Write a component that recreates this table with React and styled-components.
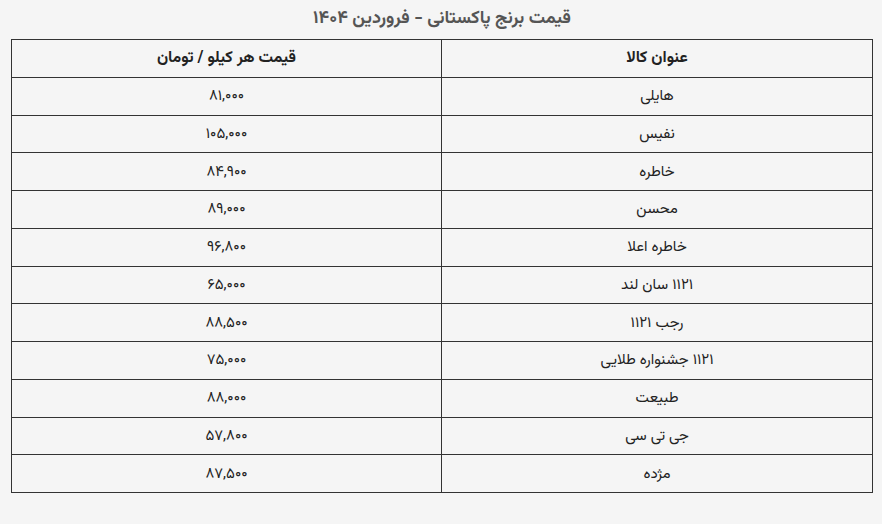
import React from "react";
import styled, { createGlobalStyle } from "styled-components";

const Global = createGlobalStyle`
  html, body { margin: 0; padding: 0; background: #f5f5f5; }
  body { font-family: "Vazirmatn", "DejaVu Sans", sans-serif; }
`;

const Page = styled.div`
  direction: rtl;
  padding: 0 9px 0 11px;
`;

const Title = styled.h2`
  margin: 0;
  height: 39px;
  line-height: 39px;
  text-align: center;
  font-size: 18px;
  font-weight: bold;
  color: #555;
`;

const Table = styled.table`
  width: 862px;
  border-collapse: collapse;
  table-layout: fixed;
  direction: rtl;
`;

const Cell = styled.td`
  border: 1px solid #333;
  height: 35.75px;
  padding: 1px 0 0;
  text-align: center;
  vertical-align: middle;
  font-size: ${(p) => (p.$head ? "16px" : "15px")};
  font-weight: ${(p) => (p.$head ? "bold" : "normal")};
  color: #222;
  ${(p) => (p.$w ? `width: ${p.$w};` : "")}
`;

const rows = [
  ["هایلی", "۸۱,۰۰۰"],
  ["نفیس", "۱۰۵,۰۰۰"],
  ["خاطره", "۸۴,۹۰۰"],
  ["محسن", "۸۹,۰۰۰"],
  ["خاطره اعلا", "۹۶,۸۰۰"],
  ["۱۱۲۱ سان لند", "۶۵,۰۰۰"],
  ["رجب ۱۱۲۱", "۸۸,۵۰۰"],
  ["۱۱۲۱ جشنواره طلایی", "۷۵,۰۰۰"],
  ["طبیعت", "۸۸,۰۰۰"],
  ["جی تی سی", "۵۷,۸۰۰"],
  ["مژده", "۸۷,۵۰۰"],
];

export default function App() {
  return (
    <>
      <Global />
      <Page>
        <Title>قیمت برنج پاکستانی - فروردین ۱۴۰۴</Title>
        <Table>
          <thead>
            <tr>
              <Cell as="th" $head $w="430px">عنوان کالا</Cell>
              <Cell as="th" $head>قیمت هر کیلو / تومان</Cell>
            </tr>
          </thead>
          <tbody>
            {rows.map(([name, price]) => (
              <tr key={name}>
                <Cell>{name}</Cell>
                <Cell>{price}</Cell>
              </tr>
            ))}
          </tbody>
        </Table>
      </Page>
    </>
  );
}
